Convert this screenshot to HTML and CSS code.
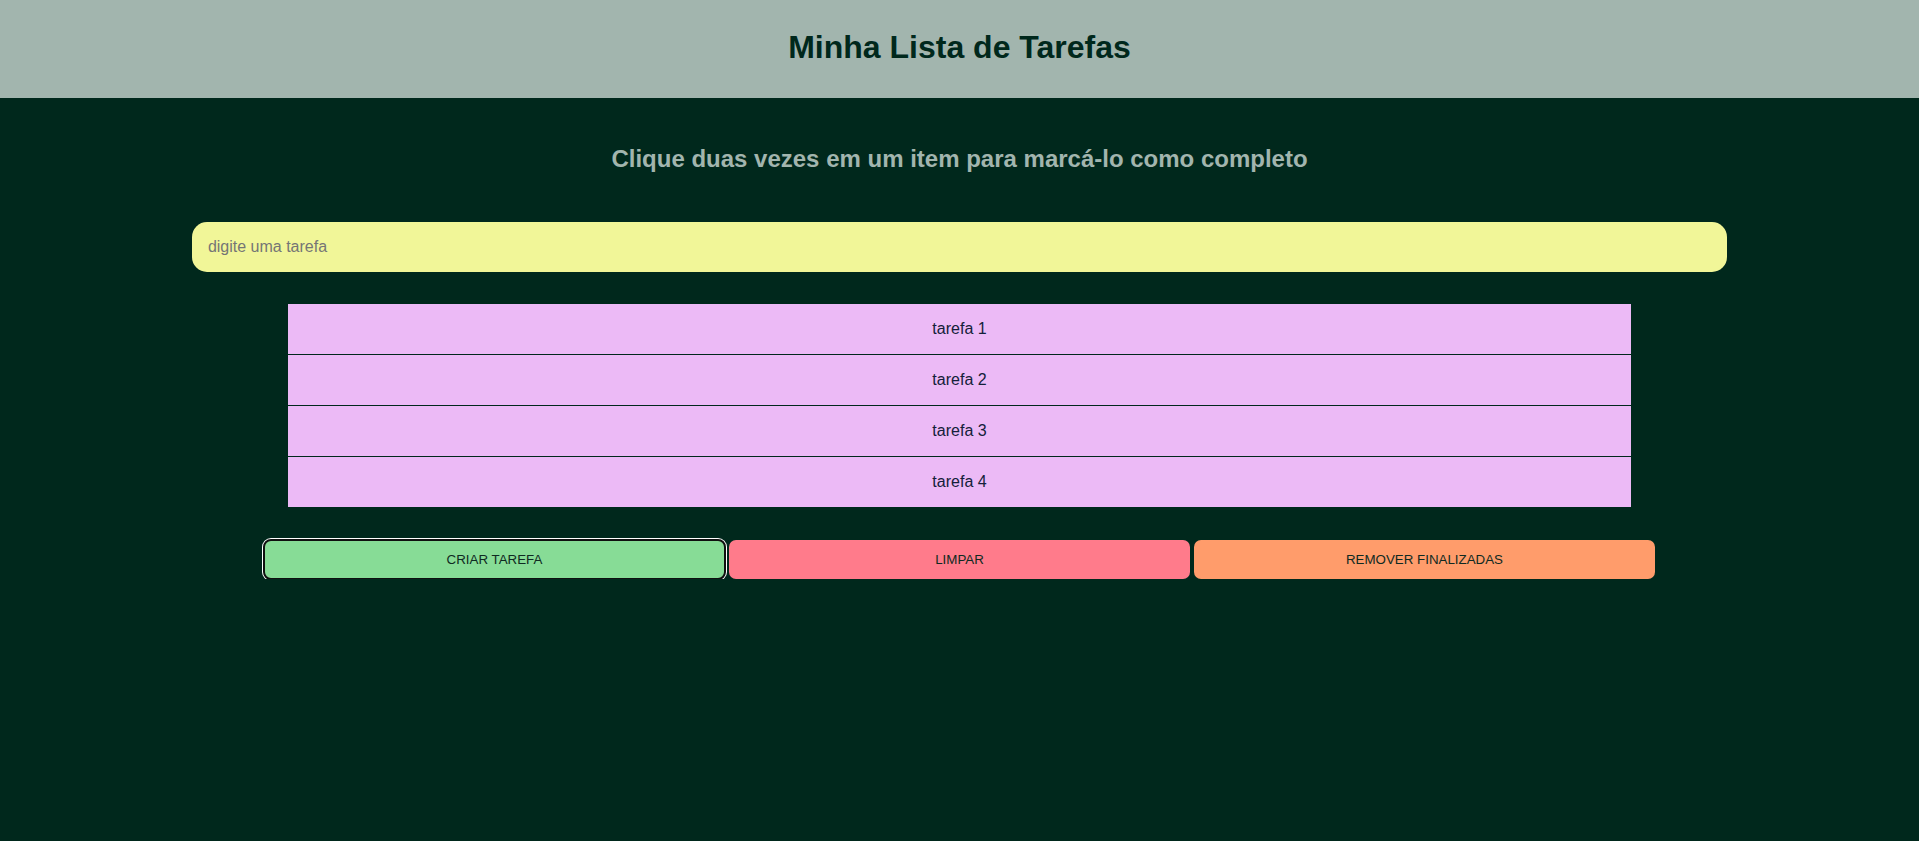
FILE: index.html
```html
<!DOCTYPE html>
<html lang="pt-BR">
<head>
<meta charset="utf-8">
<title>Minha Lista de Tarefas</title>
<link rel="stylesheet" href="styles.css">
</head>
<body>
<header class="topbar">
  <h1 class="title">Minha Lista de Tarefas</h1>
</header>
<main class="content">
  <h2 class="hint">Clique duas vezes em um item para marcá-lo como completo</h2>
  <input class="task-input" type="text" placeholder="digite uma tarefa">
  <ul class="task-list">
    <li class="task">tarefa 1</li>
    <li class="task">tarefa 2</li>
    <li class="task">tarefa 3</li>
    <li class="task">tarefa 4</li>
  </ul>
  <div class="actions">
    <button class="btn btn-create">CRIAR TAREFA</button>
    <button class="btn btn-clear">LIMPAR</button>
    <button class="btn btn-remove">REMOVER FINALIZADAS</button>
  </div>
</main>
</body>
</html>
```
FILE: styles.css
```css
* { box-sizing: border-box; }

html, body {
  margin: 0;
  padding: 0;
  background: #00281c;
  font-family: "Liberation Sans", Arial, sans-serif;
  min-height: 100%;
}

.topbar {
  background: #a2b5ae;
  height: 98px;
  padding-top: 29px;
  text-align: center;
}

.title {
  margin: 0;
  font-size: 32px;
  line-height: 36px;
  font-weight: bold;
  color: #00281c;
}

.content {
  display: flex;
  flex-direction: column;
  align-items: center;
}

.hint {
  margin: 47px 0 49px;
  font-size: 24px;
  line-height: 28px;
  font-weight: bold;
  color: #a2b5ae;
  text-align: center;
}

.task-input {
  width: 80%;
  height: 50px;
  margin: 0 0 32px;
  padding: 0 16px;
  border: none;
  border-radius: 15px;
  background: #f1f698;
  font-family: "Liberation Sans", Arial, sans-serif;
  font-size: 16px;
  color: #222;
  outline: none;
}

.task-input::placeholder {
  color: #757575;
}

.task-list {
  list-style: none;
  width: 70%;
  margin: 0 0 32px;
  padding: 0;
}

.task {
  height: 51px;
  line-height: 50px;
  background: #ecbaf6;
  border-bottom: 1px solid #00281c;
  text-align: center;
  font-size: 16px;
  color: #14213a;
}

.actions {
  width: 100%;
  display: flex;
  justify-content: center;
  gap: 4.45px;
}

.btn {
  width: 24%;
  height: 39px;
  border: none;
  border-radius: 7px;
  font-family: "Liberation Sans", Arial, sans-serif;
  font-size: 13.333px;
  color: #0f2a22;
  cursor: pointer;
}

.btn-create {
  background: #87dc96;
  outline: 2px solid #101010;
  outline-offset: -1px;
  box-shadow: 0 0 0 2px #ffffff;
}

.btn-clear { background: #ff7b8b; }

.btn-remove { background: #ff9c6b; }
```
